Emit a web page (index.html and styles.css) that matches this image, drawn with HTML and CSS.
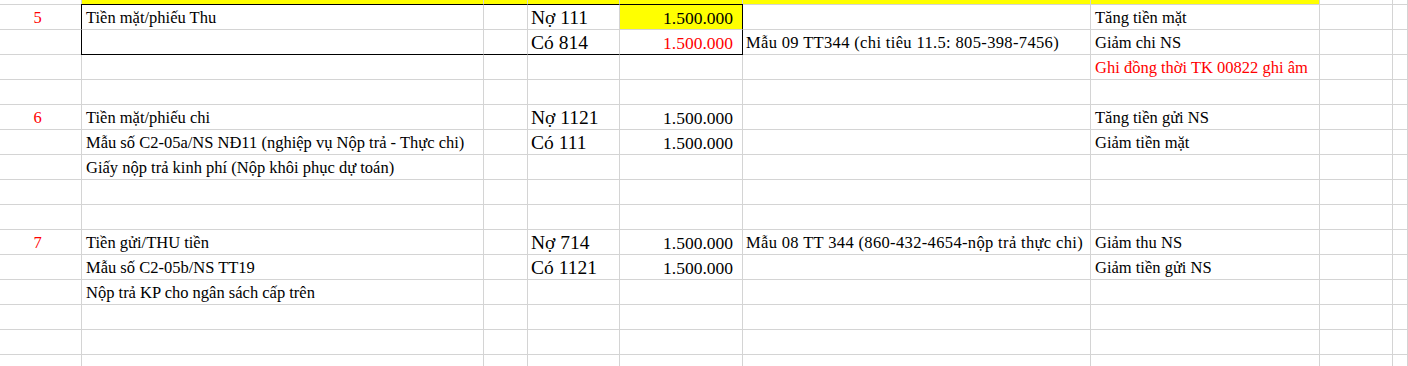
FILE: index.html
```html
<!DOCTYPE html>
<html lang="vi">
<head>
<meta charset="utf-8">
<title>Sheet</title>
<link rel="stylesheet" href="styles.css">
</head>
<body>
<div class="sheet">
  <!-- row 0 (partial) -->
  <div class="c"></div><div class="c y"></div><div class="c y"></div><div class="c y"></div><div class="c y"></div><div class="c y"></div><div class="c y"></div><div class="c"></div><div class="c"></div>

  <!-- row 1 -->
  <div class="c no">5</div>
  <div class="c bx-t bx-l">Tiền mặt/phiếu Thu</div>
  <div class="c bx-t"></div>
  <div class="c acc bx-t">Nợ 111</div>
  <div class="c num bx-t bx-r hl">1.500.000</div>
  <div class="c"></div>
  <div class="c">Tăng tiền mặt</div>
  <div class="c"></div><div class="c"></div>

  <!-- row 2 -->
  <div class="c"></div>
  <div class="c bx-b bx-l"></div>
  <div class="c bx-b"></div>
  <div class="c acc bx-b">Có 814</div>
  <div class="c num red bx-b bx-r">1.500.000</div>
  <div class="c wide">Mẫu 09 TT344 (chi tiêu 11.5: 805-398-7456)</div>
  <div class="c">Giảm chi NS</div>
  <div class="c"></div><div class="c"></div>

  <!-- row 3 -->
  <div class="c"></div><div class="c"></div><div class="c"></div><div class="c"></div><div class="c"></div><div class="c"></div>
  <div class="c red">Ghi đồng thời TK 00822 ghi âm</div>
  <div class="c"></div><div class="c"></div>

  <!-- row 4 -->
  <div class="c"></div><div class="c"></div><div class="c"></div><div class="c"></div><div class="c"></div><div class="c"></div><div class="c"></div><div class="c"></div><div class="c"></div>

  <!-- row 5 -->
  <div class="c no">6</div>
  <div class="c">Tiền mặt/phiếu chi</div>
  <div class="c"></div>
  <div class="c acc">Nợ 1121</div>
  <div class="c num">1.500.000</div>
  <div class="c"></div>
  <div class="c">Tăng tiền gửi NS</div>
  <div class="c"></div><div class="c"></div>

  <!-- row 6 -->
  <div class="c"></div>
  <div class="c">Mẫu số C2-05a/NS NĐ11 (nghiệp vụ Nộp trả - Thực chi)</div>
  <div class="c"></div>
  <div class="c acc">Có 111</div>
  <div class="c num">1.500.000</div>
  <div class="c"></div>
  <div class="c">Giảm tiền mặt</div>
  <div class="c"></div><div class="c"></div>

  <!-- row 7 -->
  <div class="c"></div>
  <div class="c">Giấy nộp trả kinh phí (Nộp khôi phục dự toán)</div>
  <div class="c"></div><div class="c"></div><div class="c"></div><div class="c"></div><div class="c"></div><div class="c"></div><div class="c"></div>

  <!-- row 8 -->
  <div class="c"></div><div class="c"></div><div class="c"></div><div class="c"></div><div class="c"></div><div class="c"></div><div class="c"></div><div class="c"></div><div class="c"></div>
  <!-- row 9 -->
  <div class="c"></div><div class="c"></div><div class="c"></div><div class="c"></div><div class="c"></div><div class="c"></div><div class="c"></div><div class="c"></div><div class="c"></div>

  <!-- row 10 -->
  <div class="c no">7</div>
  <div class="c">Tiền gửi/THU tiền</div>
  <div class="c"></div>
  <div class="c acc">Nợ 714</div>
  <div class="c num">1.500.000</div>
  <div class="c wide">Mẫu 08 TT 344 (860-432-4654-nộp trả thực chi)</div>
  <div class="c">Giảm thu NS</div>
  <div class="c"></div><div class="c"></div>

  <!-- row 11 -->
  <div class="c"></div>
  <div class="c">Mẫu số C2-05b/NS TT19</div>
  <div class="c"></div>
  <div class="c acc">Có 1121</div>
  <div class="c num">1.500.000</div>
  <div class="c"></div>
  <div class="c">Giảm tiền gửi NS</div>
  <div class="c"></div><div class="c"></div>

  <!-- row 12 -->
  <div class="c"></div>
  <div class="c">Nộp trả KP cho ngân sách cấp trên</div>
  <div class="c"></div><div class="c"></div><div class="c"></div><div class="c"></div><div class="c"></div><div class="c"></div><div class="c"></div>

  <!-- rows 13-15 -->
  <div class="c"></div><div class="c"></div><div class="c"></div><div class="c"></div><div class="c"></div><div class="c"></div><div class="c"></div><div class="c"></div><div class="c"></div>
  <div class="c"></div><div class="c"></div><div class="c"></div><div class="c"></div><div class="c"></div><div class="c"></div><div class="c"></div><div class="c"></div><div class="c"></div>
  <div class="c"></div><div class="c"></div><div class="c"></div><div class="c"></div><div class="c"></div><div class="c"></div><div class="c"></div><div class="c"></div><div class="c"></div>
</div>
</body>
</html>
```

FILE: styles.css
```css
html, body {
  margin: 0;
  padding: 0;
  background: #ffffff;
  overflow: hidden;
}

.sheet {
  display: grid;
  grid-template-columns: 82px 402px 44px 92px 123px 348px 229px 73px 15px;
  grid-template-rows: 5px repeat(15, 25px);
  font-family: "Liberation Serif", "Times New Roman", serif;
  font-size: 16.5px;
  color: #000000;
  width: 1408px;
  height: 366px;
}

.c {
  box-sizing: border-box;
  border-right: 1px solid #d4d4d4;
  border-bottom: 1px solid #d4d4d4;
  white-space: nowrap;
  overflow: visible;
  display: flex;
  align-items: flex-end;
  padding: 0 3px 2px 4px;
  line-height: 18px;
}

.wide {
  padding-left: 3px;
  letter-spacing: 0.35px;
}

.y {
  background: #ffff00;
}

.no {
  color: #ff0000;
  justify-content: center;
  padding-left: 0;
  padding-right: 6px;
}

.acc {
  font-size: 19.5px;
  line-height: 21px;
  padding-bottom: 1px;
  padding-left: 3px;
}

.num {
  justify-content: flex-end;
  font-size: 17.5px;
  padding-right: 9px;
}

.red {
  color: #ff0000;
}

.hl {
  background: #ffff00;
}

.bx-t {
  border-top: 1px solid #000000;
  margin-top: -1px;
}

.bx-b {
  border-bottom-color: #000000;
}

.bx-l {
  border-left: 1px solid #000000;
  margin-left: -1px;
}

.bx-r {
  border-right-color: #000000;
}
```
